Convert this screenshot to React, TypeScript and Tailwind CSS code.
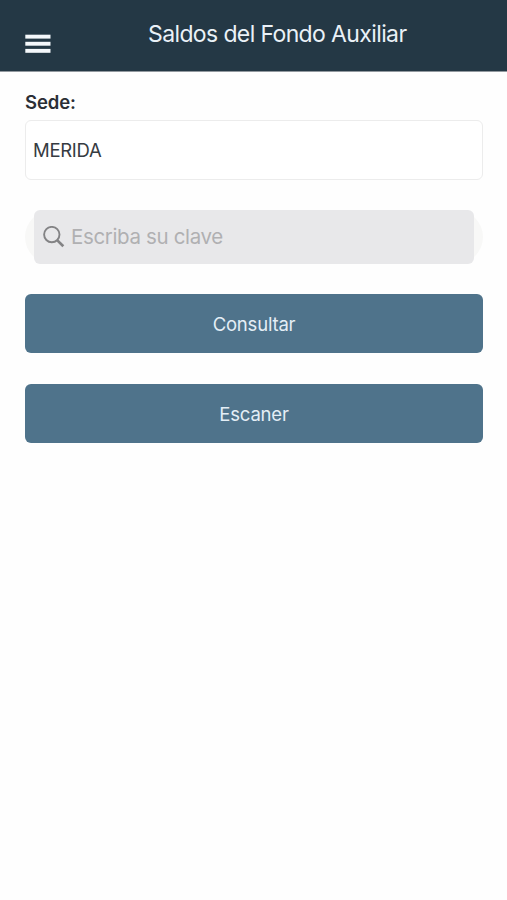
function MenuIcon() {
  return (
    <svg className="block h-5 w-[26px]" viewBox="0 0 26 20" fill="#f4f8fb">
      <rect x="0.3" y="0.7" width="25.2" height="3.9" />
      <rect x="0.3" y="7.8" width="25.2" height="3.9" />
      <rect x="0.3" y="14.9" width="25.2" height="3.9" />
    </svg>
  );
}

function SearchIcon() {
  return (
    <svg
      className="block h-[22px] w-[22px] shrink-0"
      viewBox="0 0 22 22"
      fill="none"
      stroke="#838385"
    >
      <circle cx="8.8" cy="8.6" r="7.7" strokeWidth="1.9" />
      <path d="M14.1 14.1L20.3 20.2" strokeWidth="2.7" />
    </svg>
  );
}

function Header() {
  return (
    <header className="flex h-[72px] items-start border-b border-[#92999f] bg-[#243845] pl-[25px]">
      <button className="mt-[34px]" aria-label="Menu">
        <MenuIcon />
      </button>
      <h1 className="mt-[17px] ml-[97px] text-[23px] leading-[34px] tracking-[-0.62px] whitespace-nowrap text-[#eaf1f7]">
        Saldos del Fondo Auxiliar
      </h1>
    </header>
  );
}

function ActionButton({ label }: { label: string }) {
  return (
    <button className="block h-[59px] w-full rounded-md bg-[#4f738b] pt-0.5 text-[18.5px] tracking-[-0.2px] text-[#e4eef6]">
      {label}
    </button>
  );
}

function App() {
  return (
    <div className="min-h-screen bg-[#fefefe] font-['Inter',sans-serif]">
      <Header />
      <main className="pt-[18px] pr-6 pl-[25px]">
        <p className="h-[30px] text-[18.5px] leading-[25px] font-semibold tracking-[-0.1px] text-[#2b2f36]">
          Sede:
        </p>
        <div className="flex h-[60px] items-center rounded-md border border-[#ececec] bg-white pt-0.5 pl-[7px] text-[18.5px] tracking-[-0.3px] text-[#363b42]">
          MERIDA
        </div>
        <div className="mt-[30px] h-[54px] rounded-[27px] bg-[#f8f8f7] px-[9px]">
          <div className="flex h-full items-center gap-1.5 rounded-md bg-[#e8e8ea] pl-[9px]">
            <SearchIcon />
            <span className="text-[20.5px] tracking-[-0.35px] text-[#b0b0b2]">
              Escriba su clave
            </span>
          </div>
        </div>
        <div className="mt-[30px] flex flex-col gap-[31px]">
          <ActionButton label="Consultar" />
          <ActionButton label="Escaner" />
        </div>
      </main>
    </div>
  );
}

export default App;
